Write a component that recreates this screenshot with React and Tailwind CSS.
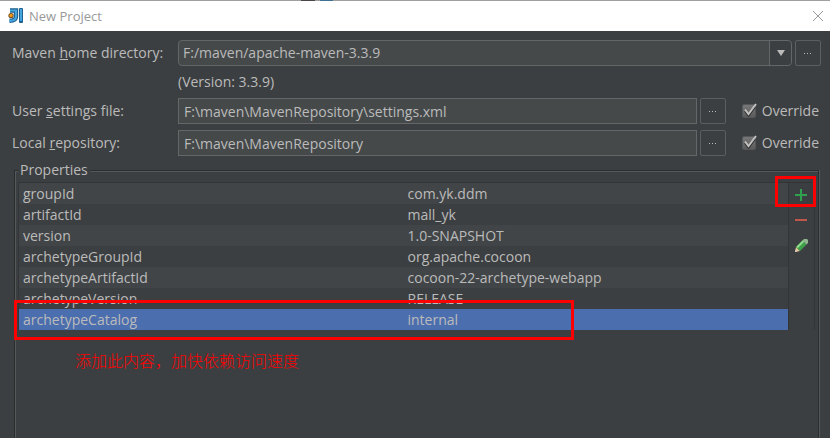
import { useState } from "react";

const properties = [
  { name: "groupId", value: "com.yk.ddm" },
  { name: "artifactId", value: "mall_yk" },
  { name: "version", value: "1.0-SNAPSHOT" },
  { name: "archetypeGroupId", value: "org.apache.cocoon" },
  { name: "archetypeArtifactId", value: "cocoon-22-archetype-webapp" },
  { name: "archetypeVersion", value: "RELEASE" },
  { name: "archetypeCatalog", value: "internal" },
];

function Logo() {
  return (
    <svg width="16" height="16" viewBox="0 0 16 16" aria-hidden="true">
      <path
        d="M2 2.5H8V8.5C8 11.5 6 12.8 1.5 12.8"
        fill="none"
        stroke="#1d5f8f"
        strokeWidth="4.4"
      />
      <path
        d="M2 2.5H8V8.5C8 11.5 6 12.8 1.5 12.8"
        fill="none"
        stroke="#45a5dc"
        strokeWidth="2.2"
      />
      <rect x="11" y="0" width="4" height="15" rx="1" fill="#1d5f8f" />
      <rect x="12" y="1" width="2" height="12" fill="#45a5dc" />
      <circle cx="3" cy="7.5" r="2.6" fill="#6d4a18" />
      <circle cx="3" cy="7.5" r="1.7" fill="#f29a1f" />
    </svg>
  );
}

function BrowseButton({ label }) {
  return (
    <button
      type="button"
      aria-label={label}
      className="flex size-[26px] shrink-0 items-center justify-center rounded-xs border border-[#5c5f60] text-[#bbbbbb]"
    >
      <svg width="8" height="2" viewBox="0 0 8 2" fill="currentColor">
        <rect x="0" y="1" width="1" height="1" />
        <rect x="3" y="1" width="1" height="1" />
        <rect x="6" y="1" width="1" height="1" />
      </svg>
    </button>
  );
}

function Override({ name }) {
  const [checked, setChecked] = useState(true);

  return (
    <label className="ml-4 flex shrink-0 items-center gap-1">
      <span className="grid">
        <input
          type="checkbox"
          name={name}
          checked={checked}
          onChange={(e) => setChecked(e.target.checked)}
          className="col-start-1 row-start-1 size-[14px] appearance-none self-center rounded-xs border border-[#55585a] bg-linear-to-b from-[#777777] to-[#5b5b5b]"
        />
        {checked && (
          <svg
            width="16"
            height="16"
            viewBox="0 0 16 16"
            fill="none"
            className="pointer-events-none col-start-1 row-start-1"
          >
            <path d="M3 8L6.5 12.5L13 4" stroke="#2b2b2b" strokeWidth="2" />
            <path d="M3 6.5L6.5 11L14 1" stroke="#c0c0c0" strokeWidth="2" />
          </svg>
        )}
      </span>
      Override
    </label>
  );
}

function PathRow({ id, label, value, overrideName }) {
  const [path, setPath] = useState(value);

  return (
    <div className="flex items-center">
      <label htmlFor={id} className="w-[166px] shrink-0">
        {label}
      </label>
      <input
        id={id}
        type="text"
        value={path}
        onChange={(e) => setPath(e.target.value)}
        className="mr-[3px] h-[26px] min-w-0 flex-1 border border-[#646667] bg-[#45494a] px-[5px]"
      />
      <BrowseButton label={`Browse ${id}`} />
      <Override name={overrideName} />
    </div>
  );
}

export default function App() {
  const [selected, setSelected] = useState("archetypeCatalog");

  return (
    <div className="flex min-h-screen flex-col overflow-hidden bg-[#3c3f41] font-['Open_Sans',sans-serif] text-sm leading-5 text-[#bbbbbb]">
      {/* Edge of the window behind the dialog */}
      <div className="flex h-px bg-[#a0a0a0]">
        <span className="ml-[301px] w-[14px] bg-[#4a4548]" />
        <span className="ml-[5px] w-[13px] bg-[#3f6f92]" />
      </div>

      <header className="flex h-[30px] items-center gap-[5px] bg-white pr-1.5 pl-2">
        <Logo />
        <h1 className="flex-1 text-[13px] text-[#999999]">New Project</h1>
        <button type="button" aria-label="Close" className="text-[#999999]">
          <svg width="12" height="12" viewBox="0 0 12 12" stroke="currentColor">
            <path d="M1 1L11 11M11 1L1 11" />
          </svg>
        </button>
      </header>

      <main className="flex flex-1 flex-col pt-[9px] pr-[9px] pl-3">
        <div className="flex items-center">
          <label htmlFor="mavenHome" className="w-[166px] shrink-0">
            Maven <u>h</u>ome directory:
          </label>
          <div className="mr-[3px] grid h-[26px] min-w-0 flex-1 grid-cols-[1fr_22px] rounded-sm border border-[#646667] bg-[#45494a]">
            <select
              id="mavenHome"
              className="col-span-2 col-start-1 row-start-1 appearance-none px-1"
            >
              <option>F:/maven/apache-maven-3.3.9</option>
            </select>
            <span className="pointer-events-none col-start-2 row-start-1 flex items-center justify-center rounded-r-sm border-l border-[#646667] bg-[#3c3f41]">
              <svg width="8" height="6" viewBox="0 0 8 6">
                <path d="M0 0H8L4 6Z" fill="#bbbbbb" />
              </svg>
            </span>
          </div>
          <BrowseButton label="Browse mavenHome" />
        </div>
        <p className="my-1.5 ml-[166px]">(Version: 3.3.9)</p>

        <div className="flex flex-col gap-1.5 pr-0.5">
          <PathRow
            id="settingsFile"
            label={
              <>
                User <u>s</u>ettings file:
              </>
            }
            value="F:\maven\MavenRepository\settings.xml"
            overrideName="overrideSettings"
          />
          <PathRow
            id="localRepository"
            label={
              <>
                Local <u>r</u>epository:
              </>
            }
            value="F:\maven\MavenRepository"
            overrideName="overrideRepository"
          />
        </div>

        <fieldset className="mt-1 mr-0.5 ml-0.5 flex min-w-0 flex-1 flex-col border border-b-0 border-[#2b2d2e] px-[3px] pt-0.5 shadow-[inset_1px_1px_0_#555859,1px_0_0_#555859]">
          <legend className="bg-[#3c3f41] px-0.5">Properties</legend>
          <div className="flex flex-1 border border-b-0 border-[#323435]">
            <div className="relative flex-1">
              <table className="w-full table-fixed">
                <tbody>
                  {properties.map((property) => (
                    <tr
                      key={property.name}
                      onClick={() => setSelected(property.name)}
                      className={
                        property.name === selected
                          ? "bg-[#4b6eaf]"
                          : "odd:bg-[#414547]"
                      }
                    >
                      <td className="h-[21px] p-0 pl-1">{property.name}</td>
                      <td className="h-[21px] p-0 pl-1">{property.value}</td>
                    </tr>
                  ))}
                </tbody>
              </table>
              <div className="pointer-events-none absolute top-[117px] -left-[5px] h-10 w-[560px] border-3 border-[#ff0000]" />
              <p className="absolute top-[165px] left-14 font-['Noto_Sans_CJK_SC',sans-serif] text-base font-light text-[#ff0000]">
                添加此内容，加快依赖访问速度
              </p>
            </div>

            <div className="flex w-[26px] flex-col items-center gap-3 border-l border-[#323435] pt-1.5">
              <button type="button" aria-label="Add" className="relative">
                <svg width="13" height="13" viewBox="0 0 13 13">
                  <path
                    d="M0 6H12M6 0V12"
                    stroke="#2fa04e"
                    strokeWidth="2"
                  />
                </svg>
                <span className="pointer-events-none absolute -top-[13px] -left-[20px] h-[31px] w-[41px] border-3 border-[#ff0000]" />
              </button>
              <button type="button" aria-label="Remove">
                <svg width="13" height="13" viewBox="0 0 13 13">
                  <path d="M0 6H12" stroke="#c0564b" strokeWidth="2" />
                </svg>
              </button>
              <button type="button" aria-label="Edit">
                <svg width="13" height="13" viewBox="0 0 13 13">
                  <path d="M0 13L1 8L5 12Z" fill="#e8c79a" />
                  <path d="M0 13L0.5 11L2 12.5Z" fill="#dddddd" />
                  <path d="M1 8L7.5 1.5L11.5 5.5L5 12Z" fill="#3f9f4b" />
                  <path d="M2 8.5L8.5 2" stroke="#8fdc8c" strokeWidth="2" />
                  <path d="M7.5 1.5L9 0H12L13 1V4L11.5 5.5Z" fill="#8fb58d" />
                </svg>
              </button>
            </div>
          </div>
        </fieldset>
      </main>
    </div>
  );
}
